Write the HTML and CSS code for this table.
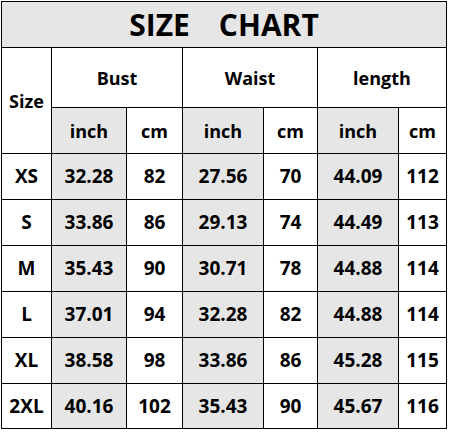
FILE: index.html
```html
<!DOCTYPE html>
<html>
<head>
<meta charset="utf-8">
<link rel="stylesheet" href="styles.css">
</head>
<body>
<div class="chart">
  <div class="cell title">SIZE<span class="gap"></span>CHART</div>
  <div class="cell size-head">Size</div>
  <div class="cell group">Bust</div>
  <div class="cell group">Waist</div>
  <div class="cell group">length</div>
  <div class="cell grey unit">inch</div><div class="cell unit">cm</div>
  <div class="cell grey unit">inch</div><div class="cell unit">cm</div>
  <div class="cell grey unit">inch</div><div class="cell unit">cm</div>

  <div class="cell">XS</div><div class="cell grey">32.28</div><div class="cell">82</div><div class="cell grey">27.56</div><div class="cell">70</div><div class="cell grey">44.09</div><div class="cell">112</div>
  <div class="cell">S</div><div class="cell grey">33.86</div><div class="cell">86</div><div class="cell grey">29.13</div><div class="cell">74</div><div class="cell grey">44.49</div><div class="cell">113</div>
  <div class="cell">M</div><div class="cell grey">35.43</div><div class="cell">90</div><div class="cell grey">30.71</div><div class="cell">78</div><div class="cell grey">44.88</div><div class="cell">114</div>
  <div class="cell">L</div><div class="cell grey">37.01</div><div class="cell">94</div><div class="cell grey">32.28</div><div class="cell">82</div><div class="cell grey">44.88</div><div class="cell">114</div>
  <div class="cell">XL</div><div class="cell grey">38.58</div><div class="cell">98</div><div class="cell grey">33.86</div><div class="cell">86</div><div class="cell grey">45.28</div><div class="cell">115</div>
  <div class="cell">2XL</div><div class="cell grey">40.16</div><div class="cell">102</div><div class="cell grey">35.43</div><div class="cell">90</div><div class="cell grey">45.67</div><div class="cell">116</div>
</div>
</body>
</html>
```
FILE: styles.css
```css
html, body {
  margin: 0;
  padding: 0;
  background: #ffffff;
}
body {
  padding: 1px 0 0 1px;
  font-family: "Open Sans", "Noto Sans", sans-serif;
  font-weight: 700;
  color: #000;
}
.chart {
  display: grid;
  width: max-content;
  grid-template-columns: 49px 74px 55px 80px 53px 80px 47px;
  grid-template-rows: 45px 59px 45px 45px 45px 45px 45px 45px 44px;
  gap: 1px;
  padding: 1px;
  background: #000;
}
.cell {
  background: #fff;
  display: flex;
  align-items: center;
  justify-content: center;
  font-size: 19px;
  line-height: 1;
}
.grey {
  background: #e6e6e6;
}
.title {
  grid-column: 1 / -1;
  background: #e6e6e6;
  font-size: 30px;
}
.gap {
  display: inline-block;
  width: 29px;
}
.size-head {
  grid-row: 2 / 4;
  font-size: 18px;
}
.group {
  grid-column: span 2;
  font-size: 18px;
}
.unit {
  font-size: 18px;
}
```
